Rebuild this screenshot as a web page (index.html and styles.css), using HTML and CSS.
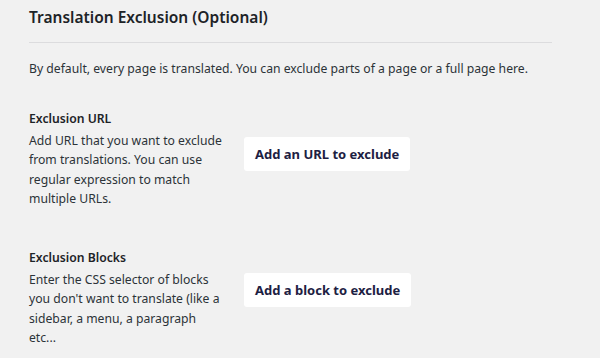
FILE: index.html
```html
<!DOCTYPE html>
<html>
<head>
<meta charset="utf-8">
<link rel="stylesheet" href="styles.css">
</head>
<body>
<div class="panel">
  <h2 class="title">Translation Exclusion (Optional)</h2>
  <p class="intro">By default, every page is translated. You can exclude parts of a page or a full page here.</p>
  <div class="row row-url">
    <div class="info">
      <div class="label">Exclusion URL</div>
      <div class="desc">Add URL that you want to exclude from translations. You can use regular expression to match multiple URLs.</div>
    </div>
    <button class="btn">Add an URL to exclude</button>
  </div>
  <div class="row row-block">
    <div class="info">
      <div class="label">Exclusion Blocks</div>
      <div class="desc">Enter the CSS selector of blocks you don't want to translate (like a sidebar, a menu, a paragraph etc...</div>
    </div>
    <button class="btn">Add a block to exclude</button>
  </div>
</div>
</body>
</html>
```
FILE: styles.css
```css
html, body {
  margin: 0;
  padding: 0;
  background: #f1f1f1;
}
body {
  font-family: "Noto Sans", "Open Sans", sans-serif;
  color: #2c3338;
  width: 600px;
  height: 358px;
  overflow: hidden;
}
.panel {
  padding: 0 0 0 29px;
  width: 523px;
}
.title {
  margin: 0;
  padding: 6px 0 14px 0;
  font-size: 15.5px;
  font-weight: 600;
  line-height: 22px;
  color: #1d2327;
  border-bottom: 1px solid #dcdcde;
}
.intro {
  margin: 16px 0 0 0;
  font-size: 12.2px;
  line-height: 20px;
  color: #2c3338;
  white-space: nowrap;
}
.row {
  display: flex;
  align-items: flex-start;
}
.row-url {
  margin-top: 30px;
}
.row-block {
  margin-top: 40px;
}
.info {
  width: 195px;
  flex: none;
}
.label {
  font-size: 12.2px;
  font-weight: 600;
  line-height: 20px;
  color: #1d2327;
}
.desc {
  font-size: 12.2px;
  line-height: 19.3px;
  margin-top: 2px;
}
.btn {
  margin-left: 20px;
  margin-top: 28px;
  background: #ffffff;
  border: none;
  border-radius: 3px;
  padding: 0 11px;
  height: 34px;
  font-family: "Noto Sans", sans-serif;
  font-weight: 700;
  font-size: 13px;
  color: #1d2042;
  cursor: pointer;
}
.row-block .btn {
  margin-top: 25px;
}
```
